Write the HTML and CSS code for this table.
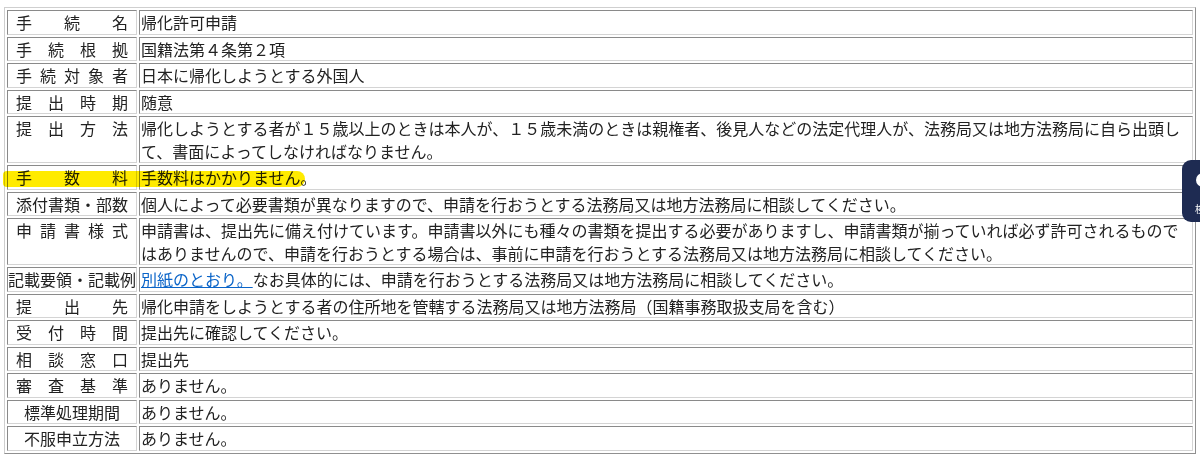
FILE: index.html
```html
<!DOCTYPE html>
<html lang="ja">
<head>
<meta charset="utf-8">
<title>帰化許可申請</title>
<link rel="stylesheet" href="styles.css">
</head>
<body>
<table class="proc">
  <tr><td class="lbl">手続名</td><td class="val">帰化許可申請</td></tr>
  <tr><td class="lbl">手続根拠</td><td class="val">国籍法第４条第２項</td></tr>
  <tr><td class="lbl">手続対象者</td><td class="val">日本に帰化しようとする外国人</td></tr>
  <tr><td class="lbl">提出時期</td><td class="val">随意</td></tr>
  <tr><td class="lbl">提出方法</td><td class="val">帰化しようとする者が１５歳以上のときは本人が、１５歳未満のときは親権者、後見人などの法定代理人が、法務局又は地方法務局に自ら出頭して、書面によってしなければなりません。</td></tr>
  <tr><td class="lbl">手数料</td><td class="val">手数料はかかりません。</td></tr>
  <tr><td class="lbl">添付書類・部数</td><td class="val">個人によって必要書類が異なりますので、申請を行おうとする法務局又は地方法務局に相談してください。</td></tr>
  <tr><td class="lbl">申請書様式</td><td class="val">申請書は、提出先に備え付けています。申請書以外にも種々の書類を提出する必要がありますし、申請書類が揃っていれば必ず許可されるものではありませんので、申請を行おうとする場合は、事前に申請を行おうとする法務局又は地方法務局に相談してください。</td></tr>
  <tr><td class="lbl wide">記載要領・記載例</td><td class="val"><a href="#">別紙のとおり。</a>なお具体的には、申請を行おうとする法務局又は地方法務局に相談してください。</td></tr>
  <tr><td class="lbl">提出先</td><td class="val">帰化申請をしようとする者の住所地を管轄する法務局又は地方法務局（国籍事務取扱支局を含む）</td></tr>
  <tr><td class="lbl">受付時間</td><td class="val">提出先に確認してください。</td></tr>
  <tr><td class="lbl">相談窓口</td><td class="val">提出先</td></tr>
  <tr><td class="lbl">審査基準</td><td class="val">ありません。</td></tr>
  <tr><td class="lbl center">標準処理期間</td><td class="val">ありません。</td></tr>
  <tr><td class="lbl center">不服申立方法</td><td class="val">ありません。</td></tr>
</table>
<div class="marker"></div>
<div class="float-btn"><span class="fb-circle"></span><span class="fb-text">検</span></div>
</body>
</html>
```
FILE: styles.css
```css
html, body {
  margin: 0;
  padding: 0;
  background: #fff;
}
body {
  font-family: "Noto Sans CJK JP", "Noto Sans", sans-serif;
  font-size: 16px;
  color: #222;
  overflow: hidden;
}
.proc {
  margin: 7px 0 0 4px;
  width: 1192px;
  border-collapse: separate;
  border-spacing: 2px;
  border: 1px solid;
  border-color: #cfcfcf #909090 #909090 #cfcfcf;
}
.proc td {
  border: 1px solid;
  border-color: #8a8a8a #d4d4d4 #d4d4d4 #8a8a8a;
  line-height: 22.5px;
  vertical-align: top;
  padding: 0 1px;
}
.proc td.lbl {
  box-sizing: border-box;
  width: 130px;
  padding: 0 8px;
  text-align: justify;
  text-align-last: justify;
  white-space: nowrap;
}
.proc td.lbl.wide {
  padding: 0;
}
.proc td.lbl.center {
  text-align: center;
  text-align-last: center;
}
.proc a {
  color: #0a64c8;
  text-decoration: underline;
}
.marker {
  position: absolute;
  left: 3px;
  top: 171px;
  width: 302px;
  height: 16px;
  background: #ffeb00;
  mix-blend-mode: multiply;
  border-radius: 4px 8px 8px 4px;
}
.float-btn {
  position: absolute;
  left: 1182px;
  top: 160px;
  width: 30px;
  height: 62px;
  background: #1e2b52;
  border-radius: 9px;
}
.fb-circle {
  position: absolute;
  left: 14px;
  top: 13px;
  width: 14px;
  height: 14px;
  border-radius: 50%;
  background: #fff;
}
.fb-text {
  position: absolute;
  left: 13px;
  top: 43px;
  font-size: 10px;
  line-height: 12px;
  color: #fff;
}
```
